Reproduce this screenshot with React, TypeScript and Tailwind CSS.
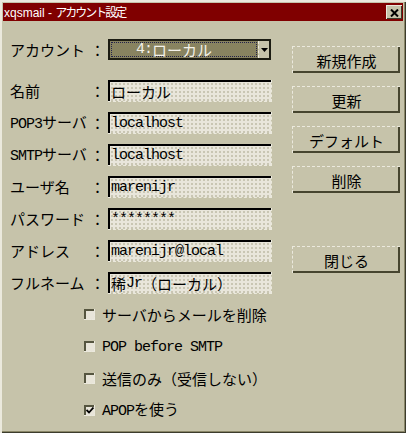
import React from "react";

const ASCII = /^[\x20-\x7e]+$/;

// bitmap-font look: half-width latin in mono, full-width kana/kanji
const Txt = ({ t }: { t: string }) => (
  <>
    {t
      .split(/([\x20-\x7e]+)/)
      .filter(Boolean)
      .map((p, i) =>
        ASCII.test(p) ? (
          <span key={i} className="font-['Liberation_Mono',monospace] text-[15px] tracking-[-1px] whitespace-pre">
            {p}
          </span>
        ) : (
          <span key={i}>{p}</span>
        )
      )}
  </>
);

const fields = [
  { label: "名前", value: "ローカル" },
  { label: "POP3サーバ", value: "localhost" },
  { label: "SMTPサーバ", value: "localhost" },
  { label: "ユーザ名", value: "marenijr" },
  { label: "パスワード", value: "********" },
  { label: "アドレス", value: "marenijr@local" },
  { label: "フルネーム", value: "稀Jr（ローカル）" },
];

const checks = [
  { label: "サーバからメールを削除", on: false },
  { label: "POP before SMTP", on: false },
  { label: "送信のみ（受信しない）", on: false },
  { label: "APOPを使う", on: true },
];

const Label = ({ text }: { text: string }) => (
  <>
    <span className="w-[77px] whitespace-nowrap">
      <Txt t={text} />
    </span>
    <span className="w-[21px] text-center">：</span>
  </>
);

const Button = ({ text, className = "" }: { text: string; className?: string }) => (
  <button
    className={`w-[108px] h-[27px] flex items-center justify-center border-t border-l border-dashed border-[#ebe9dd] shadow-[inset_-2px_-2px_0_#46452f] bg-[#c6c3aa] text-black ${className}`}
  >
    <Txt t={text} />
  </button>
);

export default function App() {
  return (
    <div className="w-[406px] h-[433px] bg-[#c6c3aa] border-t-2 border-l-2 border-[#ebe9dd] shadow-[inset_-1px_-1px_0_#3c3c2c,inset_-2px_-2px_0_#8a8768] flex flex-col font-['Noto_Sans_CJK_JP',sans-serif] text-[15px] leading-none text-black overflow-hidden">
      {/* title bar */}
      <div className="mt-[1px] ml-[1px] mr-[3px] h-[18px] bg-[#800000] flex items-center justify-between pr-[1px]">
        <div className="text-white text-[12px] pl-[1px] whitespace-pre">
          <span className="font-['Liberation_Sans',sans-serif]">xqsmail - </span>
          <span className="tracking-[-2px]">アカウント設定</span>
        </div>
        <div className="w-[16px] h-[14px] bg-[#c6c3aa] border-t border-l border-[#ebe9dd] shadow-[inset_-1px_-1px_0_#3c3c2c] flex items-center justify-center">
          <svg width="9" height="8" viewBox="0 0 9 8">
            <path d="M1 0.5 L8 7.5 M8 0.5 L1 7.5" stroke="#000" strokeWidth="2" />
          </svg>
        </div>
      </div>

      <div className="flex">
        {/* left column */}
        <div className="ml-[8px] pt-[18px] flex flex-col">
          <div className="flex items-center h-[21px]">
            <Label text="アカウント" />
            <div className="w-[163px] h-[21px] flex border-2 border-[#1c1c12] bg-[#888360]">
              <div className="flex-1 m-[1px] border border-dotted border-[#22224a] flex items-center pl-[24px] text-[#f4f2ea]">
                <Txt t="4:ローカル" />
              </div>
              <div className="w-[11px] bg-[#c6c3aa] border-l border-dashed border-[#ebe9dd] flex items-center justify-center">
                <svg width="7" height="4" viewBox="0 0 7 4">
                  <path d="M0 0 H7 L3.5 4 Z" fill="#000" />
                </svg>
              </div>
            </div>
          </div>

          <div className="mt-[20px] flex flex-col gap-[11px]">
            {fields.map((f) => (
              <div key={f.label} className="flex items-center h-[21px]">
                <Label text={f.label} />
                <div className="border-b border-r border-dashed border-[#ebe9dd]">
                  <div className="w-[163px] h-[21px] border-t-2 border-l-2 border-black bg-[#e9e6db] bg-[image:radial-gradient(circle,#c9c6b3_0.8px,transparent_1px)] bg-[length:4px_4px] flex items-center pl-[1px] whitespace-nowrap overflow-hidden">
                    <Txt t={f.value} />
                  </div>
                </div>
              </div>
            ))}
          </div>

          <div className="mt-[11px] flex flex-col gap-[12px] pl-[74px]">
            {checks.map((c) => (
              <div key={c.label} className="flex items-center h-[20px] gap-[7px]">
                <div className="w-[11px] h-[11px] bg-[#e8e5d9] border-b border-r border-dashed border-[#ebe9dd] shadow-[inset_2px_2px_0_#55553f] flex items-center justify-center">
                  {c.on && (
                    <svg width="8" height="7" viewBox="0 0 8 7" className="ml-[1px] mt-[1px]">
                      <path d="M0.5 3 L3 5.5 L7.5 0.5" stroke="#000" strokeWidth="1.8" fill="none" />
                    </svg>
                  )}
                </div>
                <span className="whitespace-nowrap">
                  <Txt t={c.label} />
                </span>
              </div>
            ))}
          </div>
        </div>

        {/* right column */}
        <div className="ml-[20px] pt-[25px] flex flex-col gap-[13px]">
          <Button text="新規作成" />
          <Button text="更新" />
          <Button text="デフォルト" />
          <Button text="削除" />
          <Button text="閉じる" className="mt-[40px]" />
        </div>
      </div>
    </div>
  );
}
